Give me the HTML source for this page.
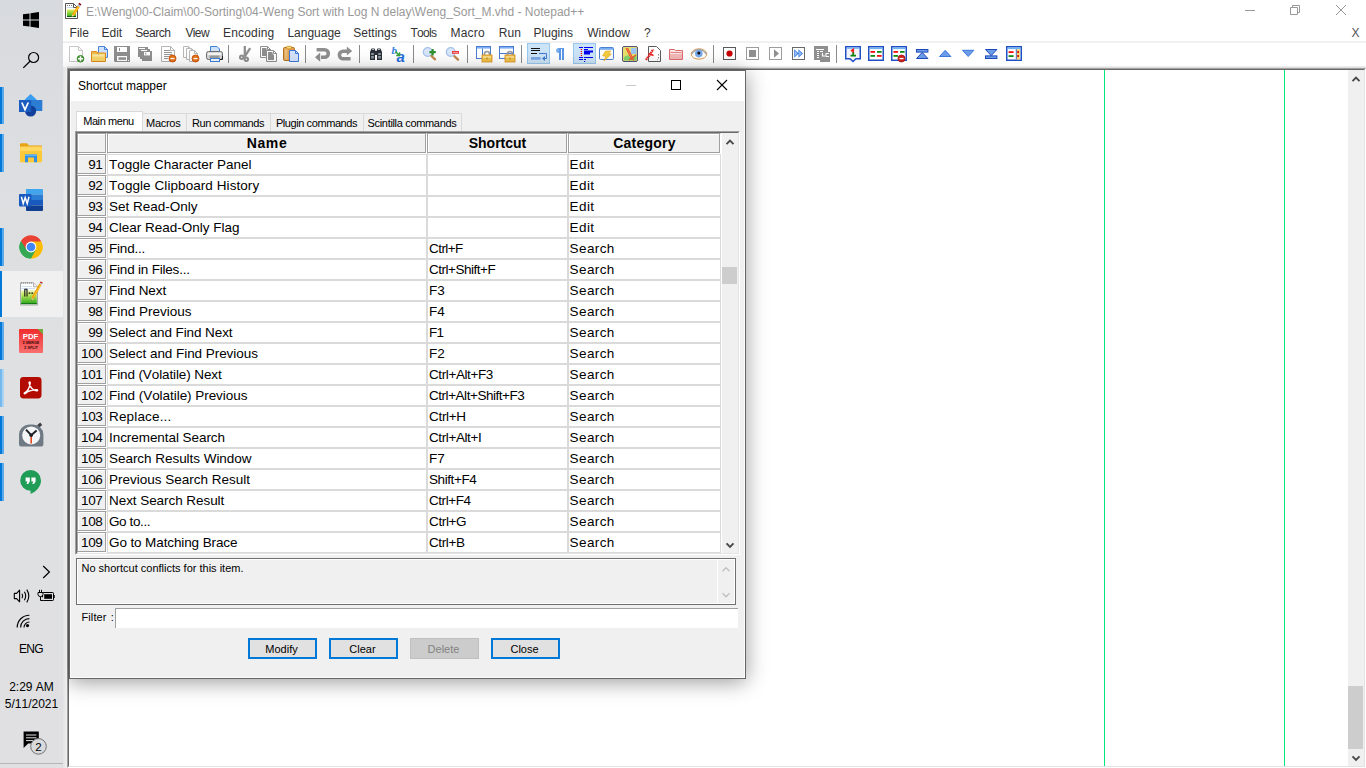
<!DOCTYPE html>
<html lang="en"><head><meta charset="utf-8"><title>Shortcut mapper - Notepad++</title>
<style>
html,body{margin:0;padding:0;}
body{width:1366px;height:768px;overflow:hidden;background:#fff;position:relative;font-family:"Liberation Sans",sans-serif;font-size:12px;color:#000;}
div,span{box-sizing:border-box;}
.a{position:absolute;}
/* ---------- taskbar ---------- */
#tb{position:absolute;left:0;top:0;width:63px;height:768px;background:linear-gradient(#d7dade 0,#dbdde0 14%,#dfe0e1 45%,#e0e0e2 100%);}
#tb .ind{position:absolute;left:0;width:4px;background:linear-gradient(90deg,#0078d7 0,#0078d7 50%,#5aa9ea 50%,#5aa9ea 100%);}
#tb .ind.l{background:linear-gradient(90deg,#76b9ed 0,#76b9ed 50%,#aad3f3 50%,#aad3f3 100%);}
#tb .act{position:absolute;left:2px;top:271px;width:61px;height:46px;background:#f0f0f0;}
#tb .ind.a{width:2px;background:#0078d7;}
#tb .t{position:absolute;left:0;width:63px;text-align:center;font-size:12px;line-height:14px;color:#000;white-space:nowrap;font-kerning:none;}
/* ---------- main window ---------- */
#frame{position:absolute;left:63px;top:0;width:1303px;height:768px;background:#fff;}
#title{position:absolute;left:86px;top:5px;font-size:12px;line-height:14px;color:#999;white-space:nowrap;font-kerning:none;}
#menu span{position:absolute;top:26px;font-size:12px;line-height:14px;color:#333;white-space:nowrap;font-kerning:none;}
#menuline{position:absolute;left:63px;top:41px;width:1303px;height:2px;background:linear-gradient(#f3f3f3,#eeeeee);}
#toolbar{position:absolute;left:63px;top:43px;width:1303px;height:25px;background:#fff;}
#tbshadow{position:absolute;left:67px;top:66px;width:1299px;height:2px;background:linear-gradient(#f4f4f4,#d8d8d8);}
#edit{position:absolute;left:67px;top:68px;width:1299px;height:700px;background:#fff;border:1px solid;border-color:#a0a0a0 #fff #fff #a0a0a0;}
#edit2{position:absolute;left:68px;top:69px;width:1297px;height:698px;background:#fff;border:1px solid;border-color:#696969 #e3e3e3 #e3e3e3 #696969;}
#leftgap{position:absolute;left:63px;top:67px;width:4px;height:701px;background:linear-gradient(90deg,#e2e3e4,#efefef);}
.gl{position:absolute;top:70px;width:1px;height:696px;background:#00e67e;}
#vs{position:absolute;left:1348px;top:70px;width:16px;height:696px;background:#f0f0f0;}
#vs .th{position:absolute;left:0;top:616px;width:15px;height:63px;background:#cdcdcd;}
.sep{position:absolute;top:45px;width:1px;height:18px;background:#8a8a8a;}
.ico{position:absolute;top:46px;width:16px;height:16px;overflow:visible;}
.sel{position:absolute;top:43px;width:23px;height:21px;background:#cce4f7;border:1px solid #99c9ef;}
/* ---------- dialog ---------- */
#dlgshadow{position:absolute;left:69px;top:70px;width:677px;height:609px;box-shadow:0 3px 20px rgba(0,0,0,.4);}
#dlg{position:absolute;left:69px;top:70px;width:677px;height:609px;background:#f0f0f0;border:1px solid #666;box-shadow:inset 1px 0 0 #fbfbfb,inset -1px -1px 0 #fbfbfb;}
#dtitle{position:absolute;left:0;top:0;width:675px;height:30px;background:#fff;}
#dtitle .tt{position:absolute;left:8px;top:8px;font-size:12px;line-height:14px;color:#000;white-space:nowrap;font-kerning:none;}
.tab{position:absolute;top:113px;height:19px;background:#f0f0f0;border:1px solid #d9d9d9;border-bottom:none;font-size:11px;letter-spacing:-0.42px;line-height:14px;padding-top:2px;padding-right:1px;text-align:center;white-space:nowrap;color:#000;font-kerning:none;}
.tab.on{top:111px;height:21px;background:#fff;padding-top:2px;padding-right:2px;}
#grid{position:absolute;left:75px;top:131px;width:665px;height:424px;background:#fff;border:1px solid;border-color:#a0a0a0 #fff #fff #a0a0a0;}
#grid2{position:absolute;left:76px;top:132px;width:663px;height:422px;background:#fff;border:1px solid;border-color:#696969 #e3e3e3 #e3e3e3 #696969;}
.gh,.rn{position:absolute;height:21px;background:#f0f0f0;border:1px solid;border-color:#a0a0a0 #fff #fff #a0a0a0;box-shadow:inset -1px -1px 0 #a0a0a0,inset 1px 1px 0 #fff;font-size:13.5px;font-kerning:none;white-space:nowrap;line-height:19px;}
.gh{top:133px;font-weight:bold;font-size:14px;text-align:center;}
.rn{left:77px;width:30px;text-align:right;padding-right:3.6px;letter-spacing:-0.4px;}
.c{position:absolute;height:21px;background:#fff;border:1px solid #dadada;font-size:13.5px;font-kerning:none;line-height:19px;padding-left:1px;white-space:nowrap;overflow:hidden;}
.nm{left:107px;width:320px;letter-spacing:0;}
.sc{left:427px;width:141px;letter-spacing:-0.4px;}
.ct{left:568px;width:153px;letter-spacing:0.4px;padding-left:.6px}
#gsb{position:absolute;left:722px;top:133px;width:16px;height:420px;background:#f0f0f0;}
#gsb .th{position:absolute;left:0;top:134px;width:15px;height:17px;background:#cdcdcd;}
#info{position:absolute;left:76px;top:558px;width:660px;height:47px;background:#f0f0f0;border:1px solid #707070;box-shadow:inset 0 0 0 1px #fff;font-size:11px;font-kerning:none;}
#info .tx{position:absolute;left:4.5px;top:2px;line-height:14px;white-space:nowrap;}
#info .vl{position:absolute;left:640px;top:1px;width:1px;height:43px;background:#fff;}
#flt{position:absolute;left:81.5px;top:610px;font-size:11px;line-height:14px;letter-spacing:0.1px;word-spacing:1px;white-space:nowrap;font-kerning:none;}
#fin{position:absolute;left:115px;top:608px;width:623px;height:20px;background:#fff;border-top:1px solid #a0a0a0;border-left:1px solid #a0a0a0;}
.btn{position:absolute;top:638px;width:69px;height:21px;background:#e1e1e1;border:2px solid #0078d7;font-size:11px;letter-spacing:0;line-height:14px;padding-top:2px;padding-right:2px;text-align:center;font-kerning:none;}
.btn.dis{background:#cccccc;border:1px solid #bfbfbf;color:#838383;padding-top:3px;}
svg{display:block;position:absolute;overflow:visible;}

</style></head><body>
<!-- main window -->
<div id="frame"></div>
<div id="title">E:\Weng\00-Claim\00-Sorting\04-Weng Sort with Log N delay\Weng_Sort_M.vhd - Notepad++</div>
<div id="menu">
<span style="left:69.6px">File</span><span style="left:101.5px">Edit</span><span style="left:135.2px;letter-spacing:-0.47px">Search</span><span style="left:185.4px;letter-spacing:-0.61px">View</span><span style="left:223.1px;letter-spacing:0.16px">Encoding</span><span style="left:287.4px">Language</span><span style="left:353.3px">Settings</span><span style="left:410.5px;letter-spacing:-0.72px">Tools</span><span style="left:450.5px;letter-spacing:0.18px">Macro</span><span style="left:498.8px">Run</span><span style="left:533.6px">Plugins</span><span style="left:587.3px">Window</span><span style="left:644px">?</span><span style="left:1351.5px;color:#555">X</span>
</div>
<div id="menuline"></div>
<div id="toolbar"></div>
<svg class="ico" style="left:69px" width="16" height="16" viewBox="0 0 16 16"><path d="M0.5 0.5H9.5L13.5 4.5V15.5H0.5Z" fill="#fff" stroke="#c8c8c8" stroke-width="1" stroke-linejoin="round"/><path d="M9.5 0.5V4.5H13.5" fill="none" stroke="#c8c8c8" stroke-width="1"/><circle cx="11.5" cy="12.8" r="3.3" fill="#44a030" stroke="#2c7a1c" stroke-width=".8"/><path d="M11.5 10.3v5M9 12.8h5" stroke="#fff" stroke-width="1.6"/></svg>
<svg class="ico" style="left:92px" width="16" height="16" viewBox="0 0 16 16"><path d="M6.5 0.5H12.5L15.5 3.5V11.5H6.5Z" fill="#cfe2fb" stroke="#4a86d8" stroke-width="1" stroke-linejoin="round"/><path d="M12.5 0.5V3.5H15.5" fill="none" stroke="#4a86d8" stroke-width="1"/><path d="M-.5 5.5H4.5L6 7H13.5V15.5H-.5Z" fill="#f8d66a" stroke="#e08a1c" stroke-width="1"/><path d="M.5 8.5H12.5V10.5H.5Z" fill="#fbe9a6"/><path d="M0.5 7L5 7L6.5 8.5" fill="none" stroke="#e08a1c" stroke-width=".8"/></svg>
<svg class="ico" style="left:115px" width="16" height="16" viewBox="0 0 16 16"><path d="M0.0 0H15V16H0.0L-1 15.0V0Z" fill="#8f8f8f"/><rect x="2.0" y="1.0" width="10.0" height="5.0" fill="#fff"/><rect x="4.0" y="2.0" width="1.0" height="3.0" fill="#8f8f8f"/><rect x="2.0" y="10.0" width="10.0" height="5.0" fill="#fff"/><rect x="3.5" y="11.3" width="7.5" height="2.5" fill="#8f8f8f"/><rect x="13.0" y="14.0" width="1.0" height="1.0" fill="#fff"/></svg>
<svg class="ico" style="left:138px" width="16" height="16" viewBox="0 0 16 16"><rect x="0" y="1" width="10" height="10" fill="#8f8f8f"/><rect x="2" y="3" width="10" height="10" fill="#8f8f8f"/><rect x="4" y="5" width="10" height="10" fill="#8f8f8f"/><path d="M2 2.5H7M4 4.5H9" stroke="#fff" stroke-width="1"/><rect x="1" y="2" width="1" height="1" fill="#fff"/><rect x="3" y="4" width="1" height="1" fill="#fff"/><rect x="6" y="6" width="6" height="3.4" fill="#fff"/><rect x="7.2" y="6.6" width="1" height="2" fill="#8f8f8f"/></svg>
<svg class="ico" style="left:161px" width="16" height="16" viewBox="0 0 16 16"><path d="M0.5 0.5H9.5L13.5 4.5V15.5H0.5Z" fill="#fff" stroke="#b4b4b4" stroke-width="1" stroke-linejoin="round"/><path d="M9.5 0.5V4.5H13.5" fill="none" stroke="#b4b4b4" stroke-width="1"/><path d="M3 4.5h6M3 6.5h8M3 8.5h8M3 10.5h5M3 12.5h4" stroke="#8c8c8c" stroke-width=".9"/><circle cx="11.5" cy="12.5" r="3.5" fill="#e8741a" stroke="#c44a00" stroke-width=".8"/><rect x="9.5" y="11.9" width="4" height="1.3" fill="#fff"/></svg>
<svg class="ico" style="left:184px" width="16" height="16" viewBox="0 0 16 16"><path d="M-0.5 0.5H4.5L7.5 3.5V11.5H-0.5Z" fill="#fff" stroke="#b8b8b8" stroke-width="1" stroke-linejoin="round"/><path d="M4.5 0.5V3.5H7.5" fill="none" stroke="#b8b8b8" stroke-width="1"/><path d="M2.5 2.5H7.5L10.5 5.5V13.5H2.5Z" fill="#fff" stroke="#b8b8b8" stroke-width="1" stroke-linejoin="round"/><path d="M7.5 2.5V5.5H10.5" fill="none" stroke="#b8b8b8" stroke-width="1"/><path d="M5.5 4.5H10.5L13.5 7.5V15.5H5.5Z" fill="#fff" stroke="#b8b8b8" stroke-width="1" stroke-linejoin="round"/><path d="M10.5 4.5V7.5H13.5" fill="none" stroke="#b8b8b8" stroke-width="1"/><circle cx="11.5" cy="12.5" r="3.5" fill="#e8741a" stroke="#c44a00" stroke-width=".8"/><rect x="9.5" y="11.9" width="4" height="1.3" fill="#fff"/></svg>
<svg class="ico" style="left:207px" width="16" height="16" viewBox="0 0 16 16"><path d="M3.5 6.5V.5H10L12.5 3V6.5Z" fill="#cfe2fb" stroke="#3f80d8" stroke-width="1"/><rect x="-.5" y="5.5" width="16" height="8" rx="2" fill="#d8d8d8" stroke="#6e6e6e" stroke-width="1"/><rect x="1" y="7" width="13" height="2" fill="#f4f4f4"/><rect x="2.5" y="9.5" width="10" height="2.4" fill="#9a9a9a"/><path d="M12 13.5H15.5V10" fill="none" stroke="#222" stroke-width="1"/><rect x="3.5" y="12.5" width="9" height="3" fill="#f4f8ff" stroke="#3f80d8" stroke-width="1"/></svg>
<div class="sep" style="left:228px"></div>
<svg class="ico" style="left:238px" width="16" height="16" viewBox="0 0 16 16"><path d="M6.8 0V10.5" stroke="#8f8f8f" stroke-width="2.3" fill="none"/><path d="M12.2 2.2L6.6 10.6" stroke="#8f8f8f" stroke-width="2.3" fill="none"/><circle cx="3.7" cy="11.3" r="1.7" fill="none" stroke="#8f8f8f" stroke-width="2"/><circle cx="8.3" cy="13.2" r="1.7" fill="none" stroke="#8f8f8f" stroke-width="2"/></svg>
<svg class="ico" style="left:261px" width="16" height="16" viewBox="0 0 16 16"><path d="M-0.5 0.5H6.5L9.5 3.5V11.5H-0.5Z" fill="#fff" stroke="#8f8f8f" stroke-width="1" stroke-linejoin="round"/><path d="M6.5 0.5V3.5H9.5" fill="none" stroke="#8f8f8f" stroke-width="1"/><path d="M1 2H5.5V3.5L7 5V10H1Z" fill="#8f8f8f"/><path d="M5.5 4.5H12.5L15.5 7.5V15.5H5.5Z" fill="#fff" stroke="#8f8f8f" stroke-width="1" stroke-linejoin="round"/><path d="M12.5 4.5V7.5H15.5" fill="none" stroke="#8f8f8f" stroke-width="1"/><path d="M7 6H11.5V7.5L13 9V14H7Z" fill="#8f8f8f"/></svg>
<svg class="ico" style="left:283px" width="16" height="16" viewBox="0 0 16 16"><rect x=".5" y="1.5" width="11" height="13" rx="1.2" fill="#e0a050" stroke="#b8701c" stroke-width="1"/><rect x="1.6" y="2.6" width="3" height="11" fill="#ecbc78"/><rect x="3.5" y=".3" width="5" height="2.6" rx=".8" fill="#f8d878" stroke="#c8861c" stroke-width=".8"/><path d="M6.5 4.5H12.5L15.5 7.5V15.5H6.5Z" fill="#d4e2fc" stroke="#3f78d8" stroke-width="1" stroke-linejoin="round"/><path d="M12.5 4.5V7.5H15.5" fill="none" stroke="#3f78d8" stroke-width="1"/></svg>
<div class="sep" style="left:305px"></div>
<svg class="ico" style="left:315px" width="16" height="16" viewBox="0 0 16 16"><path d="M1.6 3.8H9.6a3.7 3.7 0 0 1 0 7.4H6" fill="none" stroke="#8f8f8f" stroke-width="3.6"/><path d="M0 11.2l5.2-4.6v9.2z" fill="#8f8f8f"/></svg>
<svg class="ico" style="left:338px" width="16" height="16" viewBox="0 0 16 16"><path d="M12.6 12.8H5.2a3.8 3.8 0 0 1 0-7.6H9" fill="none" stroke="#8f8f8f" stroke-width="3.6"/><path d="M14.2 5L8.8 .6v8.8z" fill="#8f8f8f"/></svg>
<div class="sep" style="left:359px"></div>
<svg class="ico" style="left:369px" width="16" height="16" viewBox="0 0 16 16"><path d="M1 6L2.5 2.5H5.5L6.5 5H7.5L8.5 2.5H11.5L13 6V14H8V9H6V14H1Z" fill="#2c3038"/><path d="M2.2 7h2.6v5.6H2.2zM9.2 7h2.6v5.6H9.2z" fill="#8f98a4"/><path d="M3 3.5h2M9 3.5h2" stroke="#a8b0bc" stroke-width="1"/><rect x="1" y="9" width="5" height="1" fill="#2c3038"/><rect x="8" y="9" width="5" height="1" fill="#2c3038"/></svg>
<svg class="ico" style="left:392px" width="16" height="16" viewBox="0 0 16 16"><text x="-.5" y="7.6" font-family="Liberation Serif, serif" font-style="italic" font-weight="bold" font-size="11" fill="#2f7fe0">b</text><text x="4.6" y="15.6" font-family="Liberation Sans, sans-serif" font-style="italic" font-weight="bold" font-size="15" fill="#2a6fdc">a</text><path d="M3.5 5.5L7 9M7.6 6.4L7.4 9.6L4.2 9.6" stroke="#38a038" stroke-width="1.5" fill="none"/></svg>
<div class="sep" style="left:413px"></div>
<svg class="ico" style="left:423px" width="16" height="16" viewBox="0 0 16 16"><circle cx="4.7" cy="6" r="4.4" fill="#d8e6fa" stroke="#a4c0ec" stroke-width="1.2"/><path d="M8.5 10L12 13.3" stroke="#c4884c" stroke-width="2.4" stroke-linecap="round"/><path d="M9.6 3v6.4M6.4 6.2h6.4" stroke="#2f922f" stroke-width="2.2"/></svg>
<svg class="ico" style="left:446px" width="16" height="16" viewBox="0 0 16 16"><circle cx="4.7" cy="6" r="4.4" fill="#d8e6fa" stroke="#a4c0ec" stroke-width="1.2"/><path d="M8.5 10.3L12 13.6" stroke="#c4884c" stroke-width="2.4" stroke-linecap="round"/><rect x="6" y="5" width="7" height="2.8" fill="#f03a3a"/><rect x="7" y="6" width="5" height=".8" fill="#f8b0b0"/></svg>
<div class="sep" style="left:467px"></div>
<svg class="ico" style="left:476px" width="16" height="16" viewBox="0 0 16 16"><rect x=".5" y=".5" width="14" height="12" fill="#fff" stroke="#4a7cd4" stroke-width="1"/><rect x="1" y="1" width="13" height="1.6" fill="#7cb0f0"/><path d="M6.5 2.5V12" stroke="#4a7cd4" stroke-width="1"/><path d="M8.5 9.5V8a2.5 2.5 0 0 1 5 0V9.5" fill="none" stroke="#9a9a9a" stroke-width="1.6"/><rect x="6" y="9" width="10" height="7" fill="#f0c24a" stroke="#d6901c" stroke-width=".8"/><rect x="7" y="10" width="8" height="2" fill="#f8dc86"/><rect x="10.5" y="11.5" width="1" height="2" fill="#b87a18"/></svg>
<svg class="ico" style="left:499px" width="16" height="16" viewBox="0 0 16 16"><rect x=".5" y=".5" width="14" height="12" fill="#fff" stroke="#4a7cd4" stroke-width="1"/><rect x="1" y="1" width="13" height="1.6" fill="#7cb0f0"/><path d="M1 7.5H14" stroke="#4a7cd4" stroke-width="1"/><path d="M8.5 9.5V8a2.5 2.5 0 0 1 5 0V9.5" fill="none" stroke="#9a9a9a" stroke-width="1.6"/><rect x="6" y="9" width="10" height="7" fill="#f0c24a" stroke="#d6901c" stroke-width=".8"/><rect x="7" y="10" width="8" height="2" fill="#f8dc86"/><rect x="10.5" y="11.5" width="1" height="2" fill="#b87a18"/></svg>
<div class="sep" style="left:521px"></div>
<div class="sel" style="left:527px"></div>
<svg class="ico" style="left:531px" width="16" height="16" viewBox="0 0 16 16"><path d="M0 2.5H9M0 4.5H9M0 7.5H6" stroke="#111" stroke-width="1"/><path d="M8 7.5H15.5V12.5H13" fill="none" stroke="#3f78d0" stroke-width="1"/><path d="M11 12.5l3-2.6v5.2z" fill="#3f78d0"/><rect x="0" y="11" width="9.6" height="2.8" fill="#7aa8ea"/></svg>
<svg class="ico" style="left:554px" width="16" height="16" viewBox="0 0 16 16"><path d="M6 2V14M9 2V14" stroke="#5a96e8" stroke-width="2" fill="none"/><path d="M4.4 2H10V3H4.4Z" fill="#5a9ae8"/><path d="M5.2 2H4.6a2.5 2.5 0 0 0 0 5H5.2Z" fill="#78aef0"/></svg>
<div class="sel" style="left:573px"></div>
<svg class="ico" style="left:577px" width="16" height="16" viewBox="0 0 16 16"><path d="M2 1.5H6M7 1.5H16M7 3.5H11M7 5.5H16M7 7.5H13M2 11.5H6M7 11.5H16M2 13.5H6M7 13.5H9" stroke="#0000f0" stroke-width="1.2"/><path d="M7 5.5H16M7 7.5H13" stroke="#0000f0" stroke-width="1.8"/><rect x="7" y="15" width="1.2" height="1" fill="#0000f0"/><path d="M4.4 3v7" stroke="#f00000" stroke-width="1.3" stroke-dasharray="1.1 .9"/></svg>
<svg class="ico" style="left:599px" width="16" height="16" viewBox="0 0 16 16"><rect x=".5" y="1.5" width="14" height="12" rx="1" fill="#fff" stroke="#4a80d4" stroke-width="1"/><rect x="1" y="2" width="13" height="1.8" fill="#78acf0"/><path d="M6.5 5H12L9.5 8H12.5L5 15L6.8 10H3.5Z" fill="#f4cc3c" stroke="#e0a820" stroke-width=".6"/></svg>
<svg class="ico" style="left:622px" width="16" height="16" viewBox="0 0 16 16"><rect x=".5" y=".5" width="15" height="15" rx="1.5" fill="#e8e06c" stroke="#54547c" stroke-width="1"/><rect x="9" y="2" width="5.5" height="6" fill="#9cc4f4"/><path d="M2 11L6 9L9 12L14.5 8V14.5H2Z" fill="#84d46c"/><path d="M4 2L10 14M5.5 2L12 14.5M14 9L7 14" stroke="#f05030" stroke-width="1.1" fill="none"/></svg>
<svg class="ico" style="left:646px" width="16" height="16" viewBox="0 0 16 16"><path d="M2.5 .5H10.5L14.5 4.5V15.5H2.5Z" fill="#fff" stroke="#5c5c5c" stroke-width="1"/><path d="M0 14L2 11L4.5 8.5L5.5 5.5L7.5 3.5" stroke="#e82020" stroke-width="2.2" fill="none" stroke-dasharray="1.6 .5"/><path d="M2.5 7.5L7.5 9.5" stroke="#e82020" stroke-width="1.6"/><path d="M12.5 8v5l-1.5 1" stroke="#909090" stroke-width="1" stroke-dasharray="1.5 1.5" fill="none"/></svg>
<svg class="ico" style="left:669px" width="16" height="16" viewBox="0 0 16 16"><path d="M.5 3.5H5.5L6.5 4.5H13.5V13.5H.5Z" fill="#fbe4e4" stroke="#dc6c6c" stroke-width="1"/><path d="M1 8H13V13H1Z" fill="#f0a4a4" opacity=".7"/><path d="M1.5 6.5H12.5" stroke="#e48484" stroke-width="1"/></svg>
<svg class="ico" style="left:691px" width="16" height="16" viewBox="0 0 16 16"><ellipse cx="8" cy="8" rx="7.8" ry="5.2" fill="#fff" stroke="#e0a050" stroke-width="1"/><path d="M.5 8Q8 -1 15.5 8" fill="none" stroke="#a8a8a8" stroke-width="1.6"/><circle cx="7.8" cy="7.6" r="3.8" fill="#78a8e4"/><circle cx="7.8" cy="7" r="1.5" fill="#10101c"/></svg>
<div class="sep" style="left:713px"></div>
<svg class="ico" style="left:723px" width="16" height="16" viewBox="0 0 16 16"><rect x=".5" y="1.5" width="12" height="12" fill="#fff" stroke="#5a5a5a" stroke-width="1"/><circle cx="6.5" cy="7.5" r="3.1" fill="#c80000"/></svg>
<svg class="ico" style="left:746px" width="16" height="16" viewBox="0 0 16 16"><rect x=".5" y="1.5" width="12" height="12" fill="#fff" stroke="#9c9c9c" stroke-width="1"/><rect x="3" y="4" width="7" height="7" fill="#8f8f8f"/></svg>
<svg class="ico" style="left:769px" width="16" height="16" viewBox="0 0 16 16"><rect x=".5" y="1.5" width="12" height="12" fill="#fff" stroke="#9c9c9c" stroke-width="1"/><path d="M5 3.2L10 7.5L5 11.8Z" fill="#8f8f8f"/></svg>
<svg class="ico" style="left:792px" width="16" height="16" viewBox="0 0 16 16"><rect x=".5" y="1.5" width="12" height="12" fill="#fff" stroke="#6a6a6a" stroke-width="1"/><path d="M2.2 3.2L6.8 7.5L2.2 11.8ZM6.4 3.2L11 7.5L6.4 11.8Z" fill="#3f80e4"/><path d="M3 5L5.4 7.5L3 10ZM7.2 5L9.6 7.5L7.2 10Z" fill="#9cc0f4"/></svg>
<svg class="ico" style="left:815px" width="16" height="16" viewBox="0 0 16 16"><rect x="-1" y="0" width="14" height="14" fill="#8f8f8f"/><path d="M1 3.5H9M2 5.5H4M5 5.5H8M2 7.5H4M2 9.5H4M2 11.5H4" stroke="#fff" stroke-width="1"/><rect x="5" y="6" width="10" height="10" fill="#8f8f8f"/><path d="M7.5 7v3h2.5M14 7.5h-3v3h3" stroke="#fff" stroke-width="1.1" fill="none"/></svg>
<div class="sep" style="left:836px"></div>
<svg class="ico" style="left:845px" width="16" height="16" viewBox="0 0 16 16"><path d="M.75 .75H15.25V12.75H11L8 15.5L5 12.75H.75Z" fill="#f4f4f8" stroke="#2050c4" stroke-width="1.5" stroke-linejoin="miter"/><rect x="1.5" y="1.5" width="13" height="1.4" fill="#7cb8f8"/><path d="M6 5L8.2 3.6V7" stroke="#f01818" stroke-width="1.8" fill="none"/><path d="M8.2 6.6V10M5.5 9.7H11" stroke="#108010" stroke-width="1.8" fill="none"/></svg>
<svg class="ico" style="left:868px" width="16" height="16" viewBox="0 0 16 16"><rect x=".75" y=".75" width="14.5" height="13.5" fill="#fff" stroke="#2050c4" stroke-width="1.5"/><rect x="1.5" y="1.5" width="13" height="1.6" fill="#6fb4f4"/><rect x="2.5" y="5" width="4.6" height="1.8" fill="#f01010"/><rect x="9" y="5" width="4.6" height="1.8" fill="#108a10"/><rect x="2.5" y="9" width="4.6" height="1.8" fill="#108a10"/><rect x="9" y="9" width="4.6" height="1.8" fill="#f01010"/></svg>
<svg class="ico" style="left:891px" width="16" height="16" viewBox="0 0 16 16"><rect x=".75" y=".75" width="14.5" height="13.5" fill="#fff" stroke="#2050c4" stroke-width="1.5"/><rect x="1.5" y="1.5" width="13" height="1.6" fill="#6fb4f4"/><rect x="2.5" y="5" width="4.6" height="1.8" fill="#f01010"/><rect x="9" y="5" width="4.6" height="1.8" fill="#108a10"/><rect x="2.5" y="9" width="4.6" height="1.8" fill="#108a10"/><circle cx="10.5" cy="12.5" r="3.5" fill="#cc2020" stroke="#a01010" stroke-width=".8"/><rect x="8.5" y="11.9" width="4" height="1.3" fill="#fff"/></svg>
<svg class="ico" style="left:916px" width="16" height="16" viewBox="0 0 16 16"><rect x=".5" y="3.5" width="11.4" height="2.6" fill="#6c9ce8" stroke="#1c48b8" stroke-width="1"/><path d="M6.2 6.4L11.9 12.5H.5Z" fill="#6c9ce8" stroke="#1c48b8" stroke-width="1" stroke-linejoin="round"/></svg>
<svg class="ico" style="left:939px" width="16" height="16" viewBox="0 0 16 16"><path d="M6.2 4.3L11.9 10.5H.5Z" fill="#6c9ce8" stroke="#3a78dc" stroke-width="1" stroke-linejoin="round"/></svg>
<svg class="ico" style="left:962px" width="16" height="16" viewBox="0 0 16 16"><path d="M.5 4.3H11.9L6.2 10.5Z" fill="#6c9ce8" stroke="#3a78dc" stroke-width="1" stroke-linejoin="round"/></svg>
<svg class="ico" style="left:985px" width="16" height="16" viewBox="0 0 16 16"><path d="M.5 3.5H11.9L6.2 9.6Z" fill="#6c9ce8" stroke="#1c48b8" stroke-width="1" stroke-linejoin="round"/><rect x=".5" y="9.9" width="11.4" height="2.6" fill="#6c9ce8" stroke="#1c48b8" stroke-width="1"/></svg>
<svg class="ico" style="left:1006px" width="16" height="16" viewBox="0 0 16 16"><rect x=".75" y=".75" width="14.5" height="13.5" fill="#fff" stroke="#2050c4" stroke-width="1.5"/><rect x="1.5" y="1.5" width="13" height="1.6" fill="#6fb4f4"/><rect x="10.3" y="3.2" width="3.6" height="10.3" fill="#f8d070"/><path d="M10.3 3.2V13.5" stroke="#2050c4" stroke-width=".8"/><rect x="2.6" y="5.2" width="5" height="1.8" fill="#f01010"/><rect x="2.6" y="9.2" width="5" height="1.8" fill="#108a10"/><rect x="11.2" y="5" width="1.8" height="2" fill="#d82010"/><rect x="11.2" y="9" width="1.8" height="2" fill="#d82010"/></svg>
<div id="tbshadow"></div>
<div id="edit"></div><div id="edit2"></div>
<div class="gl" style="left:1104px"></div>
<div class="gl" style="left:1284px"></div>
<div id="vs"><div class="th"></div></div>
<svg style="left:1245px;top:5px" width="10" height="10" viewBox="0 0 10 10"><path d="M0 5.5H10" stroke="#999" stroke-width="1"/></svg>
<svg style="left:1290px;top:5px" width="10" height="10" viewBox="0 0 10 10"><path d="M.5 2.5H7.5V9.5H.5Z" fill="none" stroke="#999" stroke-width="1"/><path d="M2.5 2.5V.5H9.5V7.5H7.5" fill="none" stroke="#999" stroke-width="1"/></svg>
<svg style="left:1336px;top:5px" width="10" height="10" viewBox="0 0 10 10"><path d="M0 0L10 10M10 0L0 10" stroke="#999" stroke-width="1"/></svg>
<svg style="left:65px;top:3px" width="17" height="16" viewBox="0 0 17 16"><defs><linearGradient id="ng" x1="0" y1="0" x2="0" y2="1"><stop offset="0" stop-color="#e0ea58"/><stop offset=".45" stop-color="#8cd838"/><stop offset="1" stop-color="#2aa81c"/></linearGradient></defs><path d="M.5 .5H8.5L12.5 4.5V15.5H.5Z" fill="#fff" stroke="#555" stroke-width="1"/><path d="M8.5 .5V4.5H12.5" fill="none" stroke="#555" stroke-width="1"/><path d="M2 2.5h1m1 0h1m1 0h1" stroke="#777" stroke-width="1"/><rect x="2" y="4" width="6" height="1" fill="#c4d8f0"/><rect x="2" y="6.6" width="9" height="7.4" fill="url(#ng)"/><rect x="2" y="13" width="9" height="1" fill="#0a5a0a"/><path d="M8 12.4L13.6 3.2" stroke="#f5a400" stroke-width="2.7"/><path d="M8.9 11L14.4 2" stroke="#ffcb40" stroke-width=".8"/><path d="M13.6 3.2L14.5 1.8" stroke="#a4bce0" stroke-width="2.7"/><path d="M14.5 1.8L15.3 .5" stroke="#8b0000" stroke-width="2.7"/><path d="M6.6 13.9L7.2 11.6L9.2 12.8Z" fill="#f0d8a0"/><path d="M6.6 13.9L6.9 12.9L7.7 13.4Z" fill="#333"/></svg>

<div id="dlgshadow"></div>
<div id="leftgap"></div>
<!-- taskbar -->
<div id="tb">
<div class="act"></div>
<div class="ind" style="top:87px;height:37px"></div>
<div class="ind" style="top:134px;height:38px"></div>
<div class="ind" style="top:228px;height:38px"></div>
<div class="ind a" style="top:271px;height:46px"></div>
<div class="ind" style="top:322px;height:38px"></div>
<div class="ind l" style="top:369px;height:38px"></div>
<div class="ind" style="top:416px;height:38px"></div>
<div class="ind" style="top:463px;height:38px"></div>
<svg style="left:23px;top:12px" width="16" height="16" viewBox="0 0 16 16"><path d="M0 2.3L6.5 1.4V7.5H0ZM7.5 1.3L16 0V7.5H7.5ZM0 8.5H6.5V14.6L0 13.7ZM7.5 8.5H16V16L7.5 14.7Z" fill="#000"/></svg>
<svg style="left:23px;top:52px" width="16" height="16" viewBox="0 0 16 16"><circle cx="10.6" cy="5.5" r="5" fill="none" stroke="#000" stroke-width="1.2"/><path d="M7 9.2L.3 15.9" stroke="#000" stroke-width="1.3"/></svg>
<svg style="left:19px;top:93px" width="24" height="24" viewBox="0 0 24 24"><path d="M11.6 1L17.6 6.6L11.6 12.5L5.8 6.6Z" fill="#3a9ef0"/><rect x="12" y="7" width="11.3" height="11" fill="#2b7cd3"/><circle cx="11.6" cy="18" r="5.6" fill="#123f99"/><rect x="0" y="7" width="12.2" height="12" fill="#1a5dbe"/><path d="M2.8 9.5L6 16.6L9.3 9.5" fill="none" stroke="#fff" stroke-width="1.7"/></svg>
<svg style="left:20px;top:143px" width="22" height="20" viewBox="0 0 22 20"><path d="M0 1.2Q0 .2 1 .2H7L9 2.4H21Q22 2.4 22 3.4V6H0Z" fill="#e8a317"/><rect x="0" y="3.6" width="22" height="15.6" rx="1" fill="#ffd75e"/><path d="M0 8H22V18.2Q22 19.2 21 19.2H1Q0 19.2 0 18.2Z" fill="#fbc93a"/><path d="M5 11.5H17V19.2H14V14.5H8V19.2H5Z" fill="#2f8fe6"/><rect x="5" y="11.5" width="12" height="1.6" fill="#5db4f4"/></svg>
<svg style="left:19px;top:189px" width="24" height="22" viewBox="0 0 24 22"><path d="M7 0H23Q24 0 24 1V5.5H7Z" fill="#41a5ee"/><rect x="7" y="5.5" width="17" height="5.5" fill="#2b7cd3"/><rect x="7" y="11" width="17" height="5.5" fill="#185abd"/><path d="M7 16.5H24V21Q24 22 23 22H8Q7 22 7 21Z" fill="#103f91"/><rect x="0" y="5" width="12.4" height="12.4" rx=".8" fill="#185abd"/><path d="M2.4 7.8L4.2 14.6L6.2 8.6L8.2 14.6L10 7.8" fill="none" stroke="#fff" stroke-width="1.5"/></svg>
<svg style="left:19px;top:235px" width="24" height="24" viewBox="0 0 24 24"><circle cx="12" cy="12" r="11.6" fill="#fff"/><path d="M12 12L1.95 6.2A11.6 11.6 0 0 1 22.05 6.2Z" fill="#ea4335"/><path d="M12 12L22.05 6.2A11.6 11.6 0 0 1 12 23.6Z" fill="#fbbc05"/><path d="M12 12L12 23.6A11.6 11.6 0 0 1 1.95 6.2Z" fill="#34a853"/><path d="M12 6.5H22.2A11.6 11.6 0 0 0 1.95 6.2L7.2 14.8Z" fill="#ea4335"/><path d="M16.8 14.8L12 23.6A11.6 11.6 0 0 0 22.2 6.5H12Z" fill="#fbbc05"/><path d="M7.2 14.8L1.95 6.2A11.6 11.6 0 0 0 12 23.6L16.8 14.8Z" fill="#34a853"/><circle cx="12" cy="12" r="5.4" fill="#fff"/><circle cx="12" cy="12" r="4.3" fill="#4285f4"/></svg>
<svg style="left:19px;top:282px" width="24" height="24" viewBox="0 0 24 24"><defs><linearGradient id="ng2" x1="0" y1="0" x2="0" y2="1"><stop offset="0" stop-color="#f4f8d8"/><stop offset=".3" stop-color="#c4e860"/><stop offset="1" stop-color="#28a81c"/></linearGradient></defs><path d="M1.5 .8H14.5L18.5 4.8V23H1.5Z" fill="#fff" stroke="#a8a8a8" stroke-width="1"/><path d="M14.5 .8V4.8H18.5" fill="#f0f0f0" stroke="#a8a8a8" stroke-width=".9"/><path d="M2 1H14" stroke="#777" stroke-width="1" stroke-dasharray="1 1"/><path d="M2.4 4.5H13M2.4 6.5H16" stroke="#cfe0f0" stroke-width="1"/><rect x="2.2" y="8" width="15.6" height="14" fill="url(#ng2)"/><rect x="2.2" y="21" width="15.6" height="1.2" fill="#147814"/><path d="M5.8 7.2V14.4M8 7.2V14.4M5.4 7.2H8.4" stroke="#111" stroke-width="1.1" fill="none"/><path d="M9.6 11.2h1.8m1 0h1.8" stroke="#111" stroke-width="1.3"/><path d="M13.6 16.4L21.4 2.2" stroke="#f0a000" stroke-width="2.6"/><path d="M14.6 15.4L21.8 2.4" stroke="#ffd050" stroke-width=".8"/><path d="M21.4 2.2L22 1.1" stroke="#b8c8e0" stroke-width="2.6"/><path d="M22 1.1L22.6 0" stroke="#c02020" stroke-width="2.6"/><path d="M12.2 18.8L12.6 15.8L14.8 17Z" fill="#e8c890"/><path d="M12.2 18.8L12.4 17.6L13.2 18.1Z" fill="#333"/></svg>
<svg style="left:19px;top:329px" width="24" height="24" viewBox="0 0 24 24"><defs><linearGradient id="pg" x1="0" y1="0" x2="0" y2="1"><stop offset="0" stop-color="#f02c2c"/><stop offset="1" stop-color="#f87070"/></linearGradient></defs><rect x="0" y="0" width="24" height="24" rx="1" fill="url(#pg)"/><path d="M18.5 0H24V5.5Z" fill="#6fae3c"/><text x="11.6" y="9.6" text-anchor="middle" font-family="'Liberation Sans',sans-serif" font-weight="bold" font-size="7.8" fill="#fff">PDF</text><text x="12" y="15.4" text-anchor="middle" font-family="'Liberation Sans',sans-serif" font-weight="bold" font-size="3.6" fill="#3a0808">Σ MERGE</text><text x="12" y="20" text-anchor="middle" font-family="'Liberation Sans',sans-serif" font-weight="bold" font-size="3.6" fill="#3a0808">Σ SPLIT</text></svg>
<svg style="left:20px;top:377px" width="22" height="22" viewBox="0 0 22 22"><rect x="0" y="0" width="21.5" height="21.5" rx="3.4" fill="#b30b00"/><path d="M4.6 15.8C7.5 14.6 9.6 10.4 10.2 6.2C10.4 4.6 9 4.6 9.1 6C9.5 9.8 13 13.4 16.6 13.8C18 13.9 18 12.6 16.4 12.7C12.6 12.9 7.4 14.4 5.4 16.4C4.4 17.3 3.8 16.2 4.6 15.8Z" fill="none" stroke="#fff" stroke-width="1.4" stroke-linejoin="round"/></svg>
<svg style="left:19px;top:422px" width="25" height="26" viewBox="0 0 25 26"><path d="M18 3.2L21.2 .6L23.2 3L20.4 5.4Z" fill="#3c4046"/><path d="M0 22.6V12.6A10.4 10 0 0 1 10.4 2.6H14A10.4 10 0 0 1 24.4 12.6V22.6A2 2 0 0 1 22.4 24.6H2A2 2 0 0 1 0 22.6Z" fill="#6f7a84"/><circle cx="12.2" cy="13.4" r="9" fill="#f4f5f6"/><path d="M7 7.6L12.2 13.2L17.6 8.6" fill="none" stroke="#1c1f24" stroke-width="2"/><path d="M12.2 13.4V21.4" stroke="#e44820" stroke-width="1.6"/><circle cx="12.2" cy="13.3" r="1.8" fill="#1c1f24"/></svg>
<svg style="left:20px;top:470px" width="22" height="24" viewBox="0 0 22 24"><path d="M10.6 0A10.4 10.4 0 0 1 21 10.4C21 17 15.6 21.6 10.6 24V20.8A10.4 10.4 0 0 1 10.6 0Z" fill="#1f9d57"/><path d="M5.6 7.6H9.8V11.4L8.2 14H6.4L7.6 11.6H5.6ZM11.4 7.6H15.6V11.4L14 14H12.2L13.4 11.6H11.4Z" fill="#fff"/></svg>
<svg style="left:40px;top:562px" width="12" height="20" viewBox="0 0 12 20"><path d="M3.2 4L9.4 10L3.2 16" fill="none" stroke="#000" stroke-width="1.2"/></svg>
<svg style="left:13px;top:587px" width="19" height="18" viewBox="0 0 19 18"><path d="M1.3 6.4H3.6L6.6 3.2V14.8L3.6 11.6H1.3Z" fill="none" stroke="#000" stroke-width="1.1" stroke-linejoin="round"/><path d="M9 6.8Q10.4 9 9 11.2M11.4 4.8Q14 9 11.4 13.2M13.8 2.6Q17.8 9 13.8 15.4" fill="none" stroke="#000" stroke-width="1.1"/></svg>
<svg style="left:37px;top:589px" width="18" height="14" viewBox="0 0 18 14"><rect x="5.5" y="3.5" width="11" height="8" rx=".8" fill="none" stroke="#000" stroke-width="1"/><rect x="16.6" y="6" width="1.1" height="3" fill="#000"/><rect x="7.2" y="5.2" width="7.8" height="4.6" fill="#000"/><path d="M1 3.5H6V5.6Q6 7.6 3.5 7.6Q1 7.6 1 5.6Z" fill="#dfdfe0" stroke="#000" stroke-width="1"/><path d="M2.5 .8V3.5M4.5 .8V3.5" stroke="#000" stroke-width="1"/><path d="M3.5 7.6V11.5H6" fill="none" stroke="#000" stroke-width="1"/><rect x="4.1" y="8.2" width="2.4" height="2.7" fill="#dfdfe0"/></svg>
<svg style="left:15px;top:613px" width="16" height="16" viewBox="0 0 16 16"><path d="M2.2 14.4A12.2 12.2 0 0 1 14.4 2.2" fill="none" stroke="#000" stroke-width="1.15"/><path d="M5.6 14.4A8.8 8.8 0 0 1 14.4 5.6" fill="none" stroke="#000" stroke-width="1.15"/><path d="M9 14.4A5.4 5.4 0 0 1 14.4 9" fill="none" stroke="#000" stroke-width="1.15"/><circle cx="12.5" cy="12.6" r="1.6" fill="#000"/></svg>
<svg style="left:22px;top:731px" width="26" height="26" viewBox="0 0 26 26"><path d="M1.6 .6H16.8V12.6H6.2L1.6 17Z" fill="#000"/><path d="M4 4H14.4M4 6.8H14.4M4 9.6H14.4" stroke="#dfdfe0" stroke-width="1"/><circle cx="16.5" cy="15.4" r="7.8" fill="#d8dadc" stroke="#707070" stroke-width="1"/><text x="16.5" y="19.6" text-anchor="middle" font-family="'Liberation Sans',sans-serif" font-size="11.5" fill="#000">2</text></svg>
<div class="t" style="top:642px;letter-spacing:-0.7px;padding-right:1px">ENG</div>
<div class="t" style="top:680px;">2:29 AM</div>
<div class="t" style="top:697px;">5/11/2021</div>
<div style="position:absolute;left:0;top:763px;width:63px;height:1px;background:#b4b6b8"></div>
</div>

<!-- dialog -->
<div id="dlg">
<div id="dtitle"><div class="tt">Shortcut mapper</div></div>
</div>
<svg style="left:626px;top:80px" width="10" height="10" viewBox="0 0 10 10"><path d="M0 5.5H10" stroke="#c8c8c8" stroke-width="1"/></svg>
<svg style="left:671px;top:80px" width="10" height="10" viewBox="0 0 10 10"><rect x=".5" y=".5" width="9" height="9" fill="none" stroke="#000" stroke-width="1"/></svg>
<svg style="left:717px;top:80px" width="10" height="10" viewBox="0 0 10 10"><path d="M0 0L10 10M10 0L0 10" stroke="#000" stroke-width="1.1"/></svg>
<div class="tab" style="left:142px;width:45px;padding-right:2.5px;letter-spacing:-.3px">Macros</div>
<div class="tab" style="left:186px;width:85px">Run commands</div>
<div class="tab" style="left:270px;width:94px">Plugin commands</div>
<div class="tab" style="left:363px;width:99px;letter-spacing:-.33px">Scintilla commands</div>
<div class="tab on" style="left:76px;width:67px">Main menu</div>
<div id="grid"></div><div id="grid2"></div>
<div class="rn" style="top:154px">91</div><div class="c nm" style="top:154px;letter-spacing:0.0px">Toggle Character Panel</div><div class="c sc" style="top:154px"></div><div class="c ct" style="top:154px">Edit</div>
<div class="rn" style="top:175px">92</div><div class="c nm" style="top:175px;letter-spacing:0.07px">Toggle Clipboard History</div><div class="c sc" style="top:175px"></div><div class="c ct" style="top:175px">Edit</div>
<div class="rn" style="top:196px">93</div><div class="c nm" style="top:196px;letter-spacing:0.0px">Set Read-Only</div><div class="c sc" style="top:196px"></div><div class="c ct" style="top:196px">Edit</div>
<div class="rn" style="top:217px">94</div><div class="c nm" style="top:217px;letter-spacing:0.0px">Clear Read-Only Flag</div><div class="c sc" style="top:217px"></div><div class="c ct" style="top:217px">Edit</div>
<div class="rn" style="top:238px">95</div><div class="c nm" style="top:238px;letter-spacing:-0.19px">Find...</div><div class="c sc" style="top:238px;letter-spacing:-0.56px">Ctrl+F</div><div class="c ct" style="top:238px">Search</div>
<div class="rn" style="top:259px">96</div><div class="c nm" style="top:259px;letter-spacing:-0.2px">Find in Files...</div><div class="c sc" style="top:259px;letter-spacing:-0.48px">Ctrl+Shift+F</div><div class="c ct" style="top:259px">Search</div>
<div class="rn" style="top:280px">97</div><div class="c nm" style="top:280px;letter-spacing:-0.07px">Find Next</div><div class="c sc" style="top:280px;letter-spacing:0.0px">F3</div><div class="c ct" style="top:280px">Search</div>
<div class="rn" style="top:301px">98</div><div class="c nm" style="top:301px;letter-spacing:0.0px">Find Previous</div><div class="c sc" style="top:301px;letter-spacing:0.0px">F4</div><div class="c ct" style="top:301px">Search</div>
<div class="rn" style="top:322px">99</div><div class="c nm" style="top:322px;letter-spacing:-0.09px">Select and Find Next</div><div class="c sc" style="top:322px;letter-spacing:-0.72px">F1</div><div class="c ct" style="top:322px">Search</div>
<div class="rn" style="top:343px">100</div><div class="c nm" style="top:343px;letter-spacing:-0.05px">Select and Find Previous</div><div class="c sc" style="top:343px;letter-spacing:0.0px">F2</div><div class="c ct" style="top:343px">Search</div>
<div class="rn" style="top:364px">101</div><div class="c nm" style="top:364px;letter-spacing:-0.11px">Find (Volatile) Next</div><div class="c sc" style="top:364px;letter-spacing:-0.4px">Ctrl+Alt+F3</div><div class="c ct" style="top:364px">Search</div>
<div class="rn" style="top:385px">102</div><div class="c nm" style="top:385px;letter-spacing:-0.05px">Find (Volatile) Previous</div><div class="c sc" style="top:385px;letter-spacing:-0.46px">Ctrl+Alt+Shift+F3</div><div class="c ct" style="top:385px">Search</div>
<div class="rn" style="top:406px">103</div><div class="c nm" style="top:406px;letter-spacing:0.16px">Replace...</div><div class="c sc" style="top:406px;letter-spacing:-0.31px">Ctrl+H</div><div class="c ct" style="top:406px">Search</div>
<div class="rn" style="top:427px">104</div><div class="c nm" style="top:427px;letter-spacing:-0.06px">Incremental Search</div><div class="c sc" style="top:427px;letter-spacing:-0.4px">Ctrl+Alt+I</div><div class="c ct" style="top:427px">Search</div>
<div class="rn" style="top:448px">105</div><div class="c nm" style="top:448px;letter-spacing:-0.04px">Search Results Window</div><div class="c sc" style="top:448px;letter-spacing:0.0px">F7</div><div class="c ct" style="top:448px">Search</div>
<div class="rn" style="top:469px">106</div><div class="c nm" style="top:469px;letter-spacing:0.0px">Previous Search Result</div><div class="c sc" style="top:469px;letter-spacing:-0.41px">Shift+F4</div><div class="c ct" style="top:469px">Search</div>
<div class="rn" style="top:490px">107</div><div class="c nm" style="top:490px;letter-spacing:-0.06px">Next Search Result</div><div class="c sc" style="top:490px;letter-spacing:-0.45px">Ctrl+F4</div><div class="c ct" style="top:490px">Search</div>
<div class="rn" style="top:511px">108</div><div class="c nm" style="top:511px;letter-spacing:-0.39px">Go to...</div><div class="c sc" style="top:511px;letter-spacing:-0.36px">Ctrl+G</div><div class="c ct" style="top:511px">Search</div>
<div class="rn" style="top:532px">109</div><div class="c nm" style="top:532px;letter-spacing:-0.11px">Go to Matching Brace</div><div class="c sc" style="top:532px;letter-spacing:-0.4px">Ctrl+B</div><div class="c ct" style="top:532px">Search</div>
<div class="gh" style="left:77px;width:30px"></div>
<div class="gh" style="left:107px;width:320px;letter-spacing:.6px">Name</div>
<div class="gh" style="left:427px;width:141px">Shortcut</div>
<div class="gh" style="left:568px;width:153px;letter-spacing:.25px">Category</div>
<div id="gsb"><div class="th"></div></div>
<div id="info"><div class="tx">No shortcut conflicts for this item.</div><div class="vl"></div></div>
<div id="flt">Filter :</div>
<div id="fin"></div>
<div class="btn" style="left:248px">Modify</div>
<div class="btn" style="left:329px">Clear</div>
<div class="btn dis" style="left:410px">Delete</div>
<div class="btn" style="left:491px">Close</div>
<svg style="left:726px;top:138.5px" width="8" height="7" viewBox="0 0 8 7"><path d="M.5 5.2L4 1.7L7.5 5.2" fill="none" stroke="#484848" stroke-width="1.9"/></svg>
<svg style="left:726px;top:542px" width="8" height="7" viewBox="0 0 8 7"><path d="M.5 1.3L4 4.8L7.5 1.3" fill="none" stroke="#484848" stroke-width="1.9"/></svg>
<svg style="left:722px;top:566px" width="8" height="7" viewBox="0 0 8 7"><path d="M.5 5.2L4 1.7L7.5 5.2" fill="none" stroke="#bfbfbf" stroke-width="1.3"/></svg>
<svg style="left:722px;top:592px" width="8" height="7" viewBox="0 0 8 7"><path d="M.5 1.3L4 4.8L7.5 1.3" fill="none" stroke="#bfbfbf" stroke-width="1.3"/></svg>
<svg style="left:1352px;top:76px" width="8" height="7" viewBox="0 0 8 7"><path d="M.5 5.2L4 1.7L7.5 5.2" fill="none" stroke="#484848" stroke-width="1.9"/></svg>
<svg style="left:1352px;top:755px" width="8" height="7" viewBox="0 0 8 7"><path d="M.5 1.3L4 4.8L7.5 1.3" fill="none" stroke="#484848" stroke-width="1.9"/></svg>

</body></html>
